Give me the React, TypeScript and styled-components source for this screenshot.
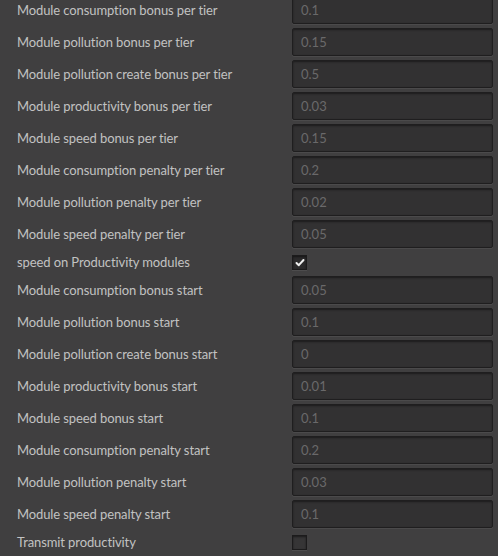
import * as React from 'react'
import styled, { createGlobalStyle } from 'styled-components'

const GlobalStyle = createGlobalStyle`
  html, body {
    margin: 0;
    padding: 0;
    background: #403f40;
    overflow: hidden;
  }
`

type Setting =
  | { kind: 'number'; label: string; value: string }
  | { kind: 'bool'; label: string; checked: boolean }

const settings: Setting[] = [
  { kind: 'number', label: 'Module consumption bonus per tier', value: '0.1' },
  { kind: 'number', label: 'Module pollution bonus per tier', value: '0.15' },
  { kind: 'number', label: 'Module pollution create bonus per tier', value: '0.5' },
  { kind: 'number', label: 'Module productivity bonus per tier', value: '0.03' },
  { kind: 'number', label: 'Module speed bonus per tier', value: '0.15' },
  { kind: 'number', label: 'Module consumption penalty per tier', value: '0.2' },
  { kind: 'number', label: 'Module pollution penalty per tier', value: '0.02' },
  { kind: 'number', label: 'Module speed penalty per tier', value: '0.05' },
  { kind: 'bool', label: 'speed on Productivity modules', checked: true },
  { kind: 'number', label: 'Module consumption bonus start', value: '0.05' },
  { kind: 'number', label: 'Module pollution bonus start', value: '0.1' },
  { kind: 'number', label: 'Module pollution create bonus start', value: '0' },
  { kind: 'number', label: 'Module productivity bonus start', value: '0.01' },
  { kind: 'number', label: 'Module speed bonus start', value: '0.1' },
  { kind: 'number', label: 'Module consumption penalty start', value: '0.2' },
  { kind: 'number', label: 'Module pollution penalty start', value: '0.03' },
  { kind: 'number', label: 'Module speed penalty start', value: '0.1' },
  { kind: 'bool', label: 'Transmit productivity', checked: false },
]

const Panel = styled.div`
  margin-top: -6px;
  display: flex;
  flex-direction: column;
  font-family: 'Lato', 'Open Sans', sans-serif;
  font-variant-ligatures: none;
`

const Row = styled.div<{ $compact?: boolean }>`
  display: grid;
  grid-template-columns: 292px 201px;
  align-items: center;
  height: ${(p) => (p.$compact ? 24 : 32)}px;
`

const Label = styled.span`
  padding-left: 17px;
  color: #c2c2c2;
  font-size: 13px;
  letter-spacing: -0.1px;
  white-space: nowrap;
`

const NumberBox = styled.div`
  box-sizing: border-box;
  height: 28px;
  display: flex;
  align-items: center;
  padding-left: 8px;
  background: #323132;
  border: 1px solid #1f1e1f;
  border-radius: 2px;
  box-shadow: inset 0 1px 2px rgba(0, 0, 0, 0.45), 0 1px 0 rgba(255, 255, 255, 0.06);
  color: #6a696a;
  font-size: 13px;
`

const CheckBox = styled.div<{ $checked: boolean }>`
  box-sizing: border-box;
  width: 15px;
  height: 15px;
  display: flex;
  align-items: center;
  justify-content: center;
  background: ${(p) => (p.$checked ? '#2b2a2b' : '#363536')};
  border: 1px solid #1c1b1c;
  box-shadow: inset 0 1px 2px rgba(0, 0, 0, 0.5), 0 1px 0 rgba(255, 255, 255, 0.07);
`

const Tick = () => (
  <svg width="10" height="9" viewBox="0 0 10 9">
    <path d="M1.5 5 L3.8 7.2 L8.5 2" fill="none" stroke="#efefef" strokeWidth="2" strokeLinecap="round" strokeLinejoin="round" />
  </svg>
)

export default function App() {
  return (
    <>
      <GlobalStyle />
      <Panel>
        {settings.map((s) =>
          s.kind === 'number' ? (
            <Row key={s.label}>
              <Label>{s.label}</Label>
              <NumberBox>{s.value}</NumberBox>
            </Row>
          ) : (
            <Row key={s.label} $compact>
              <Label>{s.label}</Label>
              <CheckBox $checked={s.checked}>{s.checked && <Tick />}</CheckBox>
            </Row>
          )
        )}
      </Panel>
    </>
  )
}
